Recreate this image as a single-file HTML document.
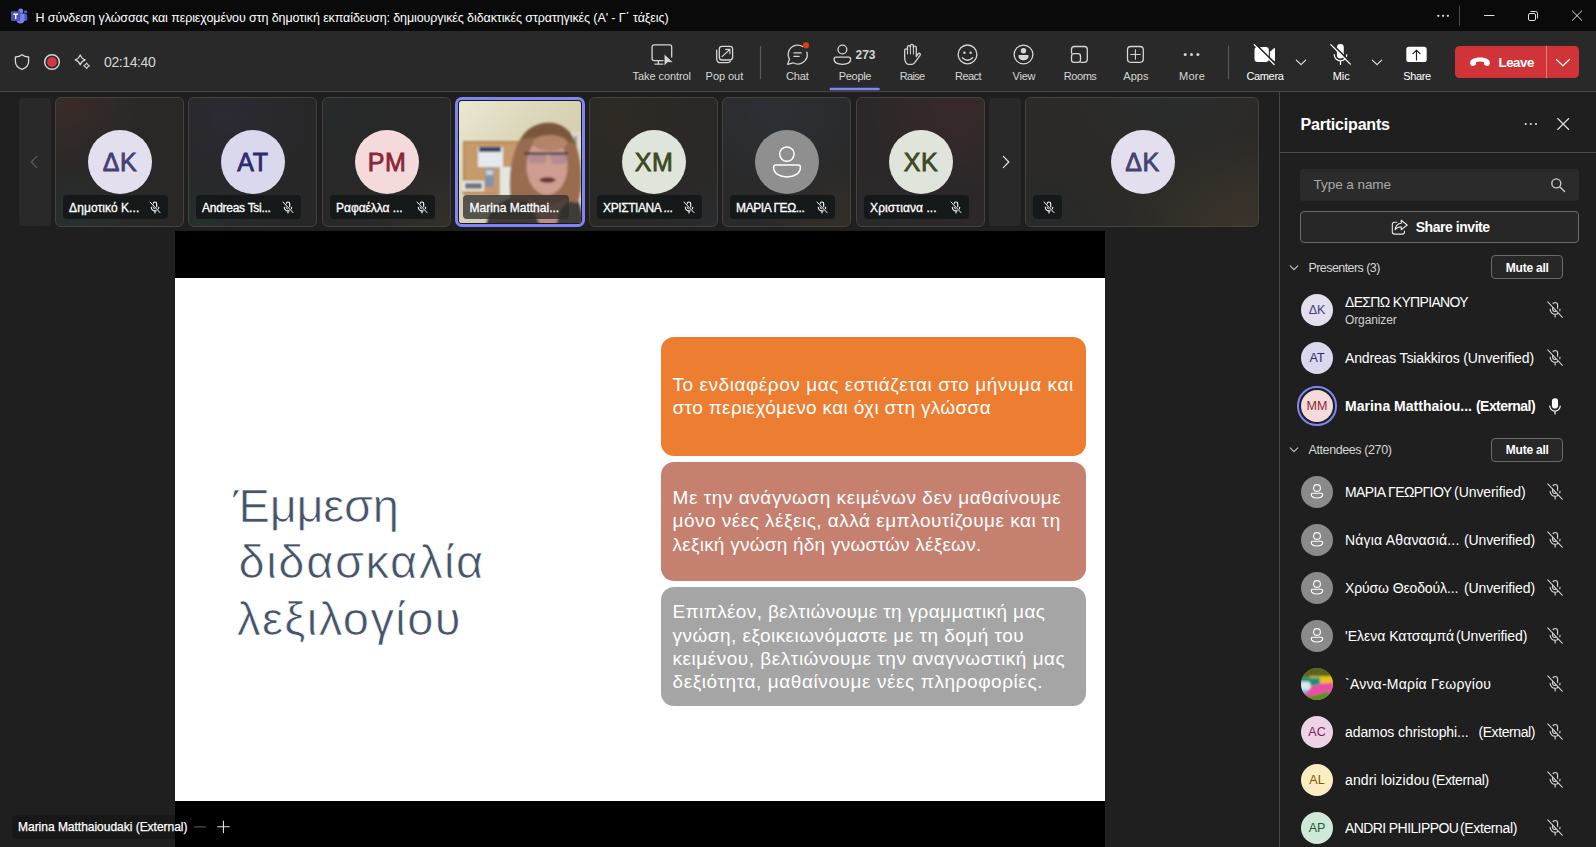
<!DOCTYPE html>
<html lang="en">
<head>
<meta charset="utf-8">
<title>Teams meeting</title>
<style>
*{box-sizing:border-box;margin:0;padding:0}
html,body{width:1596px;height:847px;overflow:hidden;background:#1f1f1f;font-family:"Liberation Sans",sans-serif;color:#fff}
.abs{position:absolute}
#app{position:relative;width:1596px;height:847px;overflow:hidden;background:#1f1f1f}
/* title bar */
#titlebar{left:0;top:0;width:1596px;height:31px;background:#0a0a0a}
#title{left:35.5px;top:1.6px;height:32px;line-height:32px;font-size:12.5px;color:#fff;white-space:nowrap;letter-spacing:0px}
/* toolbar */
#toolbar{left:0;top:31px;width:1596px;height:60px;background:#292929}
#tbline{left:0;top:91px;width:1596px;height:1px;background:#474747}
.tbi{position:absolute;top:31px;height:60px;width:80px;text-align:center}
.tbi svg{position:absolute;left:50%;top:11px;transform:translateX(-50%)}
.tbi .lb{position:absolute;left:0;right:0;top:38px;font-size:12px;line-height:14px;color:#d6d6d6;white-space:nowrap}
.tbi.w .lb{color:#fff}
.lb{top:69.1px;font-size:11px;line-height:14px;height:14px;color:#d6d6d6;white-space:nowrap}
.lb.w{color:#fff}
#time{left:104px;top:53px;font-size:14px;line-height:18px;color:#d6d6d6}
/* stage */
#stage{left:0;top:92px;width:1279px;height:755px;background:#1f1f1f}
.tile{position:absolute;top:97px;height:130px;width:129px;border-radius:6px;border:1px solid #45413d;overflow:hidden;background:#262626}
.av{position:absolute;left:32px;top:32px;width:64px;height:64px;border-radius:50%;text-align:center;line-height:65px;font-size:25px;font-weight:400;letter-spacing:.6px;-webkit-text-stroke:.8px currentColor}
.nm{position:absolute;left:7px;top:97px;width:105px;height:24px;border-radius:4px;background:#16191a;font-size:12px;line-height:26.600px;color:#fff;padding-left:6.100px;white-space:nowrap;overflow:hidden;-webkit-text-stroke:.3px #fff}
.nm svg{position:absolute;right:7px;top:5.500px}
.nmt{font-size:12px;line-height:26.600px;color:#fff;white-space:nowrap;-webkit-text-stroke:.3px #fff}
.arrowbox{top:98px;width:32px;height:128px;border-radius:4px;background:#292929}
/* slide */
#shareBox{left:175px;top:231px;width:930px;height:616px;background:#000}
#slide{left:175px;top:278px;width:930px;height:523px;background:#fff}
.sb{position:absolute;left:661px;width:425px;height:119px;border-radius:13px}

.sl{font-size:19px;line-height:22px;height:22px;color:#fff;white-space:nowrap;margin-top:-17.8px}
.stl{font-size:47px;line-height:52px;height:52px;color:#44546a;white-space:nowrap;margin-top:-41.3px;-webkit-text-stroke:0.7px #fff}
.pav{left:1301px;width:32px;height:32px;border-radius:50%;text-align:center;line-height:32px;font-size:12.500px;overflow:hidden}
.pn{font-size:14px;line-height:18px;height:18px;color:#fff;white-space:nowrap}
/* panel */
#panel{left:1279px;top:92px;width:317px;height:755px;background:#1f1f1f;border-left:1px solid #474747}
</style>
</head>
<body>
<div id="app">
<div id="titlebar" class="abs"></div>
<div id="title" class="abs" style="letter-spacing:-0.096px;">Η σύνδεση γλώσσας και περιεχομένου στη δημοτική εκπαίδευση: δημιουργικές διδακτικές στρατηγικές (Α' - Γ΄ τάξεις)</div>
<!--TITLEICONS-->
<div id="toolbar" class="abs"></div>
<div id="tbline" class="abs"></div>
<div id="time" class="abs" style="letter-spacing:-0.4px;">02:14:40</div>
<svg class="abs" style="left:0;top:0" width="1596" height="92" viewBox="0 0 1596 92" fill="none" stroke="#d6d6d6" stroke-width="1.3" stroke-linecap="round" stroke-linejoin="round">
<!-- teams logo -->
<g stroke="none">
<circle cx="25.6" cy="11.9" r="1.7" fill="#5059c9"/>
<rect x="22.6" y="14.1" width="4.7" height="6.8" rx="2" fill="#5059c9"/>
<circle cx="20.7" cy="11" r="2.5" fill="#7b83eb"/>
<path d="M16.6 13.4h7.8v6.2a3.9 3.9 0 0 1-7.8 0z" fill="#7b83eb"/>
<rect x="11" y="11.3" width="9.2" height="9.7" rx="1" fill="#4b53bc"/>
<path d="M13.4 13.6h4.6v1.3h-1.6v4.2h-1.4v-4.2h-1.6z" fill="#fff"/>
</g>
<!-- window controls -->
<g stroke="#e0e0e0" stroke-width="1">
<circle cx="1438.3" cy="15.8" r="1.15" fill="#e0e0e0" stroke="none"/><circle cx="1443.1" cy="15.8" r="1.15" fill="#e0e0e0" stroke="none"/><circle cx="1447.9" cy="15.8" r="1.15" fill="#e0e0e0" stroke="none"/>
<path d="M1459.5 6v19.5" stroke="#4a4a4a"/>
<path d="M1484.5 15.5h9.5"/>
<rect x="1528.5" y="13.5" width="7" height="7" rx="1.5"/><path d="M1531 11.5h4.5a2 2 0 0 1 2 2v4.5"/>
<path d="M1572.4 11l9.300 9.300M1581.700 11l-9.300 9.300"/>
</g>
<!-- shield -->
<path d="M22 54.7c-2 1.6-4.3 2.2-6.6 2.3v4.6c0 4 2.6 6.4 6.6 7.7 4-1.300 6.600-3.700 6.600-7.700v-4.600c-2.300-.1-4.600-.7-6.600-2.300z"/>
<!-- record -->
<circle cx="52" cy="62" r="7.3" stroke-width="1.5"/><circle cx="52" cy="62" r="4.9" fill="#d6363e" stroke="none"/>
<!-- sparkle -->
<path d="M80.200 54.900q1.200 3.800 5 5q-3.800 1.200-5 5q-1.200-3.800-5-5q3.800-1.200 5-5z" stroke-width="1.200"/>
<path d="M86.600 62.900q.7 2.200 2.900 2.900q-2.200.7-2.900 2.900q-.7-2.200-2.900-2.900q2.200-.7 2.900-2.900z" stroke-width="1.100"/>
<!-- take control -->
<path d="M663.300 60.600h-9.200a2 2 0 0 1-2-2v-11.800a2 2 0 0 1 2-2h15.600a2 2 0 0 1 2 2v10.200M658.400 60.800v3.200M655 64.100h8"/>
<path d="M664.100 53.900v12.400l3.500-3.800 5.500-.1z" fill="#d6d6d6" stroke="#292929" stroke-width=".8"/>
<!-- pop out -->
<rect x="719.300" y="46.300" width="13.300" height="13.700" rx="2.800"/>
<path d="M716.700 50.200v9a3.500 3.500 0 0 0 3.500 3.500h7.800a3 3 0 0 0 2.500-1.500" />
<path d="M722 56.700l7.800-7.200M725.600 49.400h4.300v4.300" stroke-width="1.100"/>
<!-- divider -->
<path d="M760.500 46.400v32.400" stroke="#5a5a5a" stroke-width="1.200"/>
<!-- chat -->
<path d="M802.600 46.500a9.400 9.400 0 0 0-13.200 12.600l-1.700 5.200 5.500-1.500a9.400 9.400 0 0 0 13.700-10.600"/>
<path d="M794 52.900h7.200M794 56.400h5"/>
<circle cx="806" cy="45.300" r="3.100" fill="#e2400a" stroke="none"/>
<!-- people -->
<circle cx="842.400" cy="49.500" r="4.400"/>
<path d="M836 57.200h12.800a1.900 1.900 0 0 1 1.900 1.900c0 3.400-3.600 5.300-8.300 5.300s-8.300-1.900-8.300-5.300a1.900 1.900 0 0 1 1.900-1.900z"/>
<path d="M830.800 89h47.800" stroke="#7f85f5" stroke-width="2.400"/>
<!-- raise -->
<path d="M904.700 58.500v-8.200a1.400 1.400 0 0 1 2.800 0v-3.300a1.450 1.450 0 0 1 2.900 0v-1.200a1.500 1.500 0 0 1 3 0v1.700a1.450 1.450 0 0 1 2.900 0v9l1.800-2.700q1.100-1.200 2-.2q.6.900-.2 2l-5.600 7.600q-.9 1.200-2.400 1.200h-3.200q-2 0-2.900-2q-1.100-2.400-1.100-3.900z"/>
<path d="M907.500 50.300v3.700M910.400 47v7M913.400 47.500v6.500" stroke-width="1"/>
<!-- react -->
<circle cx="967.500" cy="54.400" r="9.400"/>
<circle cx="964.400" cy="52.800" r="1.200" fill="#d6d6d6" stroke="none"/><circle cx="970.600" cy="52.800" r="1.200" fill="#d6d6d6" stroke="none"/>
<path d="M962.300 57.800q5.200 4.800 10.400 0"/>
<!-- view -->
<circle cx="1023.500" cy="54.500" r="9.400"/>
<circle cx="1023.500" cy="50.700" r="2.700" fill="#d6d6d6" stroke="none"/>
<path d="M1019.300 55.100h8.400a.9.900 0 0 1 .9.900c0 2.700-2.100 4.400-5.100 4.400s-5.100-1.700-5.100-4.400a.9.900 0 0 1 .9-.9z" fill="#d6d6d6" stroke="none"/>
<!-- rooms -->
<path d="M1071.500 53v-3.500a3 3 0 0 1 3-3h9.800a3 3 0 0 1 3 3v9.800a3 3 0 0 1-3 3h-3.500"/>
<rect x="1071.500" y="53.600" width="9" height="8.700" rx="2.600"/>
<!-- apps -->
<rect x="1127.500" y="46.500" width="15.800" height="15.800" rx="3.200"/>
<path d="M1135.400 49.700v9.600M1130.600 54.500h9.600" stroke-width="1.100"/>
<!-- more -->
<g fill="#d6d6d6" stroke="none"><circle cx="1185.200" cy="54.500" r="1.500"/><circle cx="1191.500" cy="54.500" r="1.500"/><circle cx="1197.900" cy="54.500" r="1.500"/></g>
<path d="M1228.500 46.100v32.600" stroke="#5a5a5a" stroke-width="1.200"/>
<!-- camera -->
<g fill="#fff" stroke="none">
<rect x="1254.500" y="47.100" width="14.300" height="15" rx="3"/>
<path d="M1269.900 51.800l3.800-3.400q1.300-.9 1.300.6v11.200q0 1.500-1.300.6l-3.800-3.400z"/>
</g>
<path d="M1255.700 44.100l19.400 19.400" stroke="#292929" stroke-width="1.700"/>
<path d="M1254.200 44.600l19.900 19.900" stroke="#fff" stroke-width="1.300"/>
<path d="M1296.300 60.200l4.700 4.500 4.700-4.500" stroke="#e8e8e8" stroke-width="1.100"/>
<!-- mic -->
<rect x="1336.900" y="44.100" width="6.900" height="14.300" rx="3.450" fill="#fff" stroke="none"/>
<path d="M1334.200 54.500a6.300 6.300 0 0 0 12.600 0M1340.500 60.900v3.600" stroke="#fff" stroke-width="1.200"/>
<path d="M1332.300 44.100l19 19" stroke="#292929" stroke-width="1.700"/>
<path d="M1330.800 44.600l19.500 19.500" stroke="#fff" stroke-width="1.300"/>
<path d="M1372.300 60.200l4.700 4.500 4.700-4.500" stroke="#e8e8e8" stroke-width="1.100"/>
<!-- share -->
<rect x="1406.300" y="46.800" width="20.400" height="15.200" rx="2.600" fill="#fff" stroke="none"/>
<path d="M1416.500 60v-9.600M1413 53.600l3.500-3.500 3.500 3.500" stroke="#1f1f1f" stroke-width="1.200"/>
<!-- leave -->
<rect x="1455" y="46" width="124" height="32" rx="4.500" fill="#d13438" stroke="none"/>
<path d="M1546.500 46v32" stroke="#e8797c" stroke-width="1"/>
<path d="M1480 57.600c-5 0-9.800 1.700-9.800 4.900 0 1.500.4 3.400 1.800 3.400l2.600-.5c1-.2 1.400-.9 1.400-1.800v-1.400c1.200-.6 2.600-.8 4-.8s2.800.2 4 .8v1.400c0 .9.400 1.600 1.400 1.800l2.600.5c1.400 0 1.800-1.900 1.800-3.400 0-3.200-4.800-4.900-9.800-4.900z" fill="#fff" stroke="none"/>
<path d="M1556.400 59.500l6.500 6.300 6.500-6.300" stroke="#fff" stroke-width="1.200"/>
</svg>
<div id="l1" class="abs lb" style="letter-spacing:-0.076px;left:632.6px">Take control</div>
<div id="l2" class="abs lb" style="letter-spacing:-0.046px;left:705.6px">Pop out</div>
<div id="l3" class="abs lb" style="letter-spacing:-0.162px;left:786px">Chat</div>
<div id="l4" class="abs lb" style="letter-spacing:-0.328px;left:838.8px">People</div>
<div id="l5" class="abs lb" style="letter-spacing:-0.665px;left:899.7px">Raise</div>
<div id="l6" class="abs lb" style="letter-spacing:-0.53px;left:955px">React</div>
<div id="l7" class="abs lb" style="letter-spacing:-0.214px;left:1012.5px">View</div>
<div id="l8" class="abs lb" style="letter-spacing:-0.449px;left:1063.8px">Rooms</div>
<div id="l9" class="abs lb" style="letter-spacing:0.055px;left:1123.3px">Apps</div>
<div id="l10" class="abs lb" style="letter-spacing:0.209px;left:1179.1px">More</div>
<div id="l11" class="abs lb w" style="letter-spacing:-0.337px;left:1246.4px">Camera</div>
<div id="l12" class="abs lb w" style="letter-spacing:-0.003px;left:1332.7px">Mic</div>
<div id="l13" class="abs lb w" style="letter-spacing:-0.352px;left:1403.2px">Share</div>
<div id="pc" class="abs" style="letter-spacing:-0.044px;left:855.5px;top:46.5px;font-size:12px;line-height:16px;font-weight:700;color:#d6d6d6">273</div>
<div id="lv" class="abs" style="letter-spacing:-0.514px;left:1498.5px;top:53.5px;font-size:13.4px;line-height:18px;font-weight:700;color:#fff">Leave</div>
<!--TOOLBAR-->
<div id="stage" class="abs"></div>
<!--STRIPSTART--><svg width="0" height="0" style="position:absolute"><defs>
<symbol id="mo" viewBox="0 0 12 13"><g fill="none" stroke="#fff" stroke-width="1.100" stroke-linecap="round"><rect x="4.300" y="1" width="3.400" height="6.600" rx="1.700"/><path d="M2.300 6.200a3.700 3.700 0 0 0 7.400 0M6 10v2"/><path d="M1.500 1.500l9.700 10.300" stroke="#16191a" stroke-width="2.200"/><path d="M1 1l10 10.600" stroke-width="1"/></g></symbol>
<symbol id="pers" viewBox="0 0 64 64"><g fill="none" stroke="#fff" stroke-width="1.500"><circle cx="31.900" cy="24.100" r="7.200"/><path d="M20.800 35.100h22.400a2.200 2.200 0 0 1 2.200 2.200c0 6-6 9.700-13.400 9.700s-13.400-3.700-13.400-9.700a2.200 2.200 0 0 1 2.200-2.200z"/></g></symbol>
</defs></svg>
<div class="abs arrowbox" style="left:19px"><svg class="abs" style="left:11px;top:57px" width="8" height="14" viewBox="0 0 8 14"><path d="M6.800 1.400L1.300 7l5.500 5.600" fill="none" stroke="#5c5c5c" stroke-width="1.200" stroke-linecap="round" stroke-linejoin="round"/></svg></div>
<div class="abs arrowbox" style="left:989px"><svg class="abs" style="left:13px;top:57px" width="8" height="14" viewBox="0 0 8 14"><path d="M1.300 1.400L6.800 7l-5.500 5.600" fill="none" stroke="#e0e0e0" stroke-width="1.200" stroke-linecap="round" stroke-linejoin="round"/></svg></div>
<div class="tile" style="left:55px;background:radial-gradient(ellipse 70% 60% at 0% 0%,#3b2c28 0%,rgba(59,44,40,0) 100%),radial-gradient(ellipse 60% 50% at 15% 100%,#27312f 0%,rgba(39,49,47,0) 100%),#292827"><div class="av" style="background:#e3dfef;color:#444072">ΔΚ</div><div class="nm"><span id="n1" style="letter-spacing:0.062px">Δημοτικό Κ...</span><svg width="12" height="13"><use href="#mo"/></svg></div></div>
<div class="tile" style="left:188px;background:radial-gradient(ellipse 70% 60% at 30% 15%,#2c2a33 0%,rgba(44,42,51,0) 100%),radial-gradient(ellipse 60% 50% at 10% 100%,#25302f 0%,rgba(37,48,47,0) 100%),#272727"><div class="av" style="background:#d9d8ec;color:#2f2a6e">AT</div><div class="nm"><span id="n2" style="letter-spacing:-0.285px">Andreas Tsi...</span><svg width="12" height="13"><use href="#mo"/></svg></div></div>
<div class="tile" style="left:322px;background:radial-gradient(ellipse 70% 60% at 100% 100%,#33302a 0%,rgba(51,48,42,0) 100%),radial-gradient(ellipse 60% 50% at 0% 0%,#252a2a 0%,rgba(37,42,42,0) 100%),#282828"><div class="av" style="background:#f4dadb;color:#8a2835">ΡΜ</div><div class="nm"><span id="n3" style="letter-spacing:-0.059px">Ραφαέλλα ...</span><svg width="12" height="13"><use href="#mo"/></svg></div></div>
<div class="tile" style="left:589px;background:radial-gradient(ellipse 70% 60% at 20% 20%,#2f2a24 0%,rgba(47,42,36,0) 100%),radial-gradient(ellipse 60% 50% at 100% 100%,#2a2c2e 0%,rgba(42,44,46,0) 100%),#2a2826"><div class="av" style="background:#e0e5dc;color:#3b4a23">ΧΜ</div><div class="nm"><span id="n5" style="letter-spacing:-0.429px">ΧΡΙΣΤΙΑΝΑ ...</span><svg width="12" height="13"><use href="#mo"/></svg></div></div>
<div class="tile" style="left:722px;background:radial-gradient(ellipse 70% 60% at 40% 10%,#2c3035 0%,rgba(44,48,53,0) 100%),radial-gradient(ellipse 60% 50% at 90% 100%,#332d28 0%,rgba(51,45,40,0) 100%),#2a2a2a"><div class="av" style="background:#8f8f8f"><svg class="abs" style="left:0;top:0" width="64" height="64"><use href="#pers"/></svg></div><div class="nm"><span id="n6" style="letter-spacing:-0.442px">ΜΑΡΙΑ ΓΕΩ...</span><svg width="12" height="13"><use href="#mo"/></svg></div></div>
<div class="tile" style="left:856px;background:radial-gradient(ellipse 70% 60% at 80% 10%,#38292a 0%,rgba(56,41,42,0) 100%),radial-gradient(ellipse 60% 50% at 10% 100%,#2a2a2c 0%,rgba(42,42,44,0) 100%),#2c2829"><div class="av" style="background:#e0e5dc;color:#3b4a23">ΧΚ</div><div class="nm"><span id="n7" style="letter-spacing:0.082px">Χριστιανα ...</span><svg width="12" height="13"><use href="#mo"/></svg></div></div>
<div class="tile" style="left:1025px;width:234px;background:radial-gradient(ellipse 55% 70% at 95% 100%,#3b342b 0%,rgba(59,52,43,0) 100%),radial-gradient(ellipse 50% 60% at 0% 100%,#262a2a 0%,rgba(38,42,42,0) 100%),radial-gradient(ellipse 50% 60% at 60% 0%,#2a2c2d 0%,rgba(42,44,45,0) 100%),#2c2a27"><div class="av" style="left:84.500px;background:#e3dfef;color:#444072">ΔΚ</div><div class="nm" style="width:29px"><svg width="12" height="13"><use href="#mo"/></svg></div></div>
<div class="abs" id="act" style="left:455px;top:97px;width:130px;height:130px;border-radius:7px;background:#7f85f5"></div>
<div class="abs" style="left:458px;top:100px;width:124px;height:124px;border-radius:4px;background:#1b1b1b"></div>
<svg class="abs" style="left:459px;top:101px;border-radius:3px" width="122" height="122" viewBox="459 101 122 122">
<defs><filter id="bl" x="-10%" y="-10%" width="120%" height="120%"><feGaussianBlur stdDeviation="1.300"/></filter>
<linearGradient id="wall" x1="0" y1="0" x2="1" y2="1"><stop offset="0" stop-color="#ebe8d4"/><stop offset=".45" stop-color="#d9d4b4"/><stop offset="1" stop-color="#cbc3a2"/></linearGradient></defs>
<rect x="459" y="101" width="122" height="122" fill="url(#wall)"/>
<g filter="url(#bl)">
<rect x="572" y="132" width="12" height="95" fill="#dcd9cc"/>
<rect x="574.500" y="136" width="2.500" height="60" fill="#9d9a8c"/>
<rect x="463" y="141" width="58" height="54" fill="#b4875a"/>
<rect x="465" y="143" width="55" height="50" fill="#c69a6a"/>
<rect x="478" y="147" width="25" height="20" fill="#e6e9ee"/>
<rect x="479" y="147" width="22" height="5" fill="#35456f"/>
<rect x="485" y="168" width="9" height="19" fill="#8593a8"/>
<rect x="486" y="170" width="7" height="5" fill="#c8d0dc"/>
<rect x="500" y="167" width="13" height="28" fill="#e6e6e0"/>
<rect x="463" y="181" width="21" height="10" fill="#efede6"/>
<rect x="465" y="183" width="17" height="5" fill="#56789a"/>
<rect x="465" y="186.500" width="17" height="2.500" fill="#8a7a5a"/>
<path d="M459 196h62v28h-62z" fill="#d8d1b6"/>
<path d="M486 225c2-15 14-25 32-29l52-2c8 2 12 10 13 31z" fill="#403a36"/>
<path d="M511 202c-3-22-1-50 12-67 8-11 26-14 38-9 13 6 19 25 20 44 1 14 0 24-3 32l-20 6h-32z" fill="#9a6c50"/>
<path d="M521 140c4-12 18-19 32-17 12 2 20 10 23 22-10-8-40-10-55-5z" fill="#7a573e"/>
<ellipse cx="547" cy="166" rx="20.500" ry="29" fill="#cd9d90"/>
<ellipse cx="550" cy="143" rx="17" ry="8" fill="#b48468"/>
<path d="M526 153h18a6 6 0 0 1 0 10h-14zM550 152h17l2 3-4 9h-13z" fill="#a07c96" opacity=".55"/>
<path d="M524 153.500h44" stroke="#3d2d30" stroke-width="2.200" fill="none"/>
<ellipse cx="547.500" cy="180" rx="8" ry="2.800" fill="#6b3438"/>
<path d="M528 198q18 14 38 0l4 28h-46z" fill="#bf8d80"/>
<path d="M518 202q11-4 15 6l7 18h-32z" fill="#403a36"/>
<path d="M556 226l4-15q4-8 13-10l7 25z" fill="#403a36"/>
</g>
</svg>
<div class="abs" style="left:463px;top:195px;width:106px;height:24px;border-radius:4px;background:rgba(46,46,44,.78)"></div>
<div class="abs nmt" style="left:469.600px;top:195px"><span id="n4" style="letter-spacing:0.013px">Marina Matthai...</span></div>
<!--STRIP-->
<div id="shareBox" class="abs"></div>
<div id="slide" class="abs"></div>
<div class="sb" style="top:337px;background:#ed7d31"></div>
<div class="sb" style="top:462px;background:#c58070"></div>
<div class="sb" style="top:587px;background:#a5a5a5"></div>
<div id="s11" class="abs sl" style="letter-spacing:0.544px;left:672.5px;top:391.4px">Το ενδιαφέρον μας εστιάζεται στο μήνυμα και</div>
<div id="s12" class="abs sl" style="letter-spacing:0.337px;left:672.5px;top:415px">στο περιεχόμενο και όχι στη γλώσσα</div>
<div id="s21" class="abs sl" style="letter-spacing:0.55px;left:672.5px;top:504.6px">Με την ανάγνωση κειμένων δεν μαθαίνουμε</div>
<div id="s22" class="abs sl" style="letter-spacing:0.484px;left:672.5px;top:528.2px">μόνο νέες λέξεις, αλλά εμπλουτίζουμε και τη</div>
<div id="s23" class="abs sl" style="letter-spacing:0.234px;left:672.5px;top:551.9px">λεξική γνώση ήδη γνωστών λέξεων.</div>
<div id="s31" class="abs sl" style="letter-spacing:0.379px;left:672.5px;top:618.7px">Επιπλέον, βελτιώνουμε τη γραμματική μας</div>
<div id="s32" class="abs sl" style="letter-spacing:0.472px;left:672.5px;top:642.3px">γνώση, εξοικειωνόμαστε με τη δομή του</div>
<div id="s33" class="abs sl" style="letter-spacing:0.525px;left:672.5px;top:665.4px">κειμένου, βελτιώνουμε την αναγνωστική μας</div>
<div id="s34" class="abs sl" style="letter-spacing:0.576px;left:672.5px;top:688.7px">δεξιότητα, μαθαίνουμε νέες πληροφορίες.</div>
<div id="t1" class="abs stl" style="letter-spacing:-0.221px;left:233px;top:521px">Έμμεση</div>
<div id="t2" class="abs stl" style="letter-spacing:1.623px;left:238.5px;top:577.4px">διδασκαλία</div>
<div id="t3" class="abs stl" style="letter-spacing:1.424px;left:237px;top:634.3px">λεξιλογίου</div>
<div class="abs" style="left:12px;top:815px;width:181px;height:24px;border-radius:4px;background:rgba(0,0,0,.2)"></div>
<div id="bl1" class="abs" style="letter-spacing:-0.019px;left:18px;top:818.500px;font-size:12px;line-height:16px;color:#fff;white-space:nowrap;-webkit-text-stroke:.25px #fff">Marina Matthaioudaki (External)</div>
<svg class="abs" style="left:190px;top:816px" width="44" height="22" viewBox="190 816 44 22" fill="none" stroke-linecap="round"><path d="M194.500 826.900h11.200" stroke="#4f4f4f" stroke-width="1.100"/><path d="M217.700 826.800h11.500M223.450 821.100v11.500" stroke="#e0e0e0" stroke-width="1.100"/></svg>
<!--SLIDE-->
<div id="panel" class="abs"></div>
<!--PANELSTART--><svg width="0" height="0" style="position:absolute"><defs>
<symbol id="mo2" viewBox="0 0 17 18"><g fill="none" stroke="#d6d6d6" stroke-width="1.200" stroke-linecap="round"><rect x="5.900" y="1.600" width="5.200" height="9.400" rx="2.600"/><path d="M3.300 8.700a5.200 5.200 0 0 0 10.400 0M8.500 14v2.800"/><path d="M1.700.3l15 15.800" stroke="#1f1f1f" stroke-width="2.400"/><path d="M.8.900l15.400 16.200" stroke-width="1.100"/></g></symbol>
<symbol id="pers2" viewBox="0 0 32 32"><g fill="none" stroke="#fff" stroke-width="1.100"><circle cx="16" cy="12" r="3.400"/><path d="M11.200 17.300h9.600a1 1 0 0 1 1 1c0 2.400-2.500 3.700-5.800 3.700s-5.800-1.300-5.800-3.700a1 1 0 0 1 1-1z"/></g></symbol>
</defs></svg>
<div class="abs" style="left:1280px;top:152px;width:316px;height:1px;background:#4a4a4a"></div>
<div id="ph" class="abs" style="letter-spacing:-0.191px;left:1300.500px;top:115.400px;font-size:16px;line-height:20px;font-weight:700;color:#fff;white-space:nowrap">Participants</div>
<svg class="abs" style="left:1520px;top:112px" width="56" height="24" viewBox="1520 112 56 24" fill="none" stroke="#e0e0e0" stroke-width="1.100" stroke-linecap="round"><g fill="#e0e0e0" stroke="none"><circle cx="1525.700" cy="124" r="1.050"/><circle cx="1530.800" cy="124" r="1.050"/><circle cx="1536" cy="124" r="1.050"/></g><path d="M1557.700 118.500l11 11M1568.700 118.500l-11 11"/></svg>
<div class="abs" style="left:1300px;top:169px;width:279px;height:32px;border-radius:4px;background:#2b2b2b"></div>
<div id="ps" class="abs" style="letter-spacing:-0.059px;left:1313.600px;top:176.200px;font-size:13.500px;line-height:18px;color:#a8a8a8;white-space:nowrap">Type a name</div>
<svg class="abs" style="left:1549px;top:176px" width="20" height="20" viewBox="1549 176 20 20" fill="none" stroke="#c8c8c8" stroke-width="1.400" stroke-linecap="round"><circle cx="1556.300" cy="183.400" r="4.500"/><path d="M1559.700 186.800l4.900 4.800"/></svg>
<div class="abs" style="left:1300px;top:211px;width:279px;height:32px;border-radius:4px;border:1px solid #6b6b6b;background:#272727"></div>
<svg class="abs" style="left:1390px;top:218px" width="20" height="18" viewBox="1390 218 20 18" fill="none" stroke="#e8e8e8" stroke-width="1.100" stroke-linecap="round" stroke-linejoin="round"><path d="M1396.800 222.200h-2.200a2.300 2.300 0 0 0-2.300 2.300v7.300a2.300 2.300 0 0 0 2.300 2.300h7.600a2.300 2.300 0 0 0 2.300-2.300v-.800"/><path d="M1401.200 220.300v3c-3.600.300-5.600 2.500-6.100 6.300 1.700-2.100 3.600-2.900 6.100-2.900v3.100l6-4.800z"/></svg>
<div id="psi" class="abs" style="letter-spacing:-0.448px;left:1415.700px;top:217.700px;font-size:14px;line-height:18px;font-weight:700;color:#fff;white-space:nowrap">Share invite</div>
<svg class="abs" style="left:1288px;top:262.7px" width="12" height="10" viewBox="0 0 12 10"><path d="M2.200 2.800l3.800 3.900 3.800-3.900" fill="none" stroke="#c8c8c8" stroke-width="1.100" stroke-linecap="round" stroke-linejoin="round"/></svg>
<div id="sec1" class="abs" style="letter-spacing:-0.565px;left:1308.500px;top:259.8px;font-size:12.500px;line-height:16px;color:#d6d6d6;white-space:nowrap">Presenters (3)</div>
<div class="abs" style="left:1491px;top:255.3px;width:72px;height:24px;border-radius:4px;border:1px solid #6b6b6b;background:#272727"></div>
<div id="mb1" class="abs" style="letter-spacing:-0.221px;left:1505.800px;top:259.9px;font-size:12px;line-height:16px;font-weight:700;color:#fff;white-space:nowrap">Mute all</div>
<svg class="abs" style="left:1288px;top:445px" width="12" height="10" viewBox="0 0 12 10"><path d="M2.200 2.800l3.800 3.900 3.800-3.900" fill="none" stroke="#c8c8c8" stroke-width="1.100" stroke-linecap="round" stroke-linejoin="round"/></svg>
<div id="sec2" class="abs" style="letter-spacing:-0.397px;left:1308.500px;top:442.1px;font-size:12.500px;line-height:16px;color:#d6d6d6;white-space:nowrap">Attendees (270)</div>
<div class="abs" style="left:1491px;top:437.6px;width:72px;height:24px;border-radius:4px;border:1px solid #6b6b6b;background:#272727"></div>
<div id="mb2" class="abs" style="letter-spacing:-0.221px;left:1505.800px;top:442.2px;font-size:12px;line-height:16px;font-weight:700;color:#fff;white-space:nowrap">Mute all</div>
<div class="abs pav" style="top:294px;background:#e3dfef;color:#444072">ΔΚ</div><div id="r1a" class="abs pn" style="letter-spacing:-0.677px;left:1345px;top:293.1px;">ΔΕΣΠΩ ΚΥΠΡΙΑΝΟΥ</div><div id="r1s" class="abs" style="letter-spacing:-0.121px;left:1345px;top:311.8px;font-size:12px;line-height:16px;color:#d0d0d0;white-space:nowrap">Organizer</div><svg class="abs" style="left:1546.900px;top:301.1px" width="16.200" height="17.200"><use href="#mo2"/></svg>
<div class="abs pav" style="top:342px;background:#d9d8ec;color:#2f2a6e">AT</div><div id="r2a" class="abs pn" style="letter-spacing:-0.148px;left:1345px;top:348.6px;">Andreas Tsiakkiros (Unverified)</div><svg class="abs" style="left:1546.900px;top:349.1px" width="16.200" height="17.200"><use href="#mo2"/></svg>
<div class="abs" style="left:1297.300px;top:386.3px;width:39.400px;height:39.400px;border-radius:50%;border:2px solid #7f85f5"></div><div class="abs pav" style="top:390px;background:#f4dadb;color:#8a2835">MM</div><div id="r3a" class="abs pn" style="letter-spacing:0.011px;left:1345px;top:396.6px;font-weight:700;">Marina Matthaiou...</div><div id="r3b" class="abs pn" style="letter-spacing:-0.558px;left:1476px;top:396.6px;font-weight:700;">(External)</div><svg class="abs" style="left:1548px;top:397px" width="14" height="18" viewBox="0 0 14 18"><rect x="3.900" y="1.300" width="6.200" height="10.300" rx="3.100" fill="#fff"/><path d="M1.800 9a5.200 5.200 0 0 0 10.400 0M7 14.300v2.700" fill="none" stroke="#fff" stroke-width="1.200" stroke-linecap="round"/></svg>
<div class="abs pav" style="top:476px;background:#8a8a8a"><svg width="32" height="32" style="display:block"><use href="#pers2"/></svg></div><div id="r4a" class="abs pn" style="letter-spacing:-0.602px;left:1345px;top:482.6px;">ΜΑΡΙΑ ΓΕΩΡΓΙΟΥ</div><div id="r4b" class="abs pn" style="letter-spacing:-0.08px;left:1454.1px;top:482.6px;">(Unverified)</div><svg class="abs" style="left:1546.900px;top:483.1px" width="16.200" height="17.200"><use href="#mo2"/></svg>
<div class="abs pav" style="top:524px;background:#8a8a8a"><svg width="32" height="32" style="display:block"><use href="#pers2"/></svg></div><div id="r5a" class="abs pn" style="letter-spacing:0.185px;left:1345px;top:530.6px;">Νάγια Αθανασιά...</div><div id="r5b" class="abs pn" style="letter-spacing:-0.113px;left:1464px;top:530.6px;">(Unverified)</div><svg class="abs" style="left:1546.900px;top:531.1px" width="16.200" height="17.200"><use href="#mo2"/></svg>
<div class="abs pav" style="top:572px;background:#8a8a8a"><svg width="32" height="32" style="display:block"><use href="#pers2"/></svg></div><div id="r6a" class="abs pn" style="letter-spacing:-0.128px;left:1345px;top:578.6px;">Χρύσω Θεοδούλ...</div><div id="r6b" class="abs pn" style="letter-spacing:-0.113px;left:1464px;top:578.6px;">(Unverified)</div><svg class="abs" style="left:1546.900px;top:579.1px" width="16.200" height="17.200"><use href="#mo2"/></svg>
<div class="abs pav" style="top:620px;background:#8a8a8a"><svg width="32" height="32" style="display:block"><use href="#pers2"/></svg></div><div id="r7a" class="abs pn" style="letter-spacing:-0.006px;left:1345px;top:626.6px;">'Ελενα Κατσαμπά</div><div id="r7b" class="abs pn" style="letter-spacing:-0.088px;left:1456px;top:626.6px;">(Unverified)</div><svg class="abs" style="left:1546.900px;top:627.1px" width="16.200" height="17.200"><use href="#mo2"/></svg>
<svg class="abs" style="left:1301px;top:668px;border-radius:50%" width="32" height="32" viewBox="0 0 32 32"><defs><filter id="pb" x="-20%" y="-20%" width="140%" height="140%"><feGaussianBlur stdDeviation=".9"/></filter></defs><rect width="32" height="32" fill="#8a8a30"/><g filter="url(#pb)"><rect x="-2" y="-2" width="36" height="10.500" fill="#5a6420"/><rect x="9" y="8.200" width="25" height="8" fill="#e6c212"/><rect x="-1" y="9.700" width="20" height="8" fill="#14917f"/><path d="M-1 13.500h9l3 6-6 6h-6z" fill="#dde8ea"/><rect x="1" y="22" width="6" height="4" fill="#4cc0f0"/><path d="M25 15h8v10h-6z" fill="#e89030"/><path d="M4 26l6-7 10-3.500 11-1 2 8-12 8-10-1z" fill="#ee4ca8"/><path d="M5 28l10 -1 12-4 2 10h-20z" fill="#5d8f28"/></g></svg><div id="r8a" class="abs pn" style="letter-spacing:0.214px;left:1345px;top:674.6px;">`Αννα-Μαρία Γεωργίου</div><svg class="abs" style="left:1546.900px;top:675.1px" width="16.200" height="17.200"><use href="#mo2"/></svg>
<div class="abs pav" style="top:716px;background:#ecd3e6;color:#80215d">AC</div><div id="r9a" class="abs pn" style="letter-spacing:-0.09px;left:1345px;top:722.6px;">adamos christophi...</div><div id="r9b" class="abs pn" style="letter-spacing:-0.409px;left:1478.4px;top:722.6px;">(External)</div><svg class="abs" style="left:1546.900px;top:723.1px" width="16.200" height="17.200"><use href="#mo2"/></svg>
<div class="abs pav" style="top:764px;background:#fbecc2;color:#7a5c00">AL</div><div id="r10a" class="abs pn" style="letter-spacing:0.143px;left:1345px;top:770.6px;">andri loizidou</div><div id="r10b" class="abs pn" style="letter-spacing:-0.369px;left:1431.7px;top:770.6px;">(External)</div><svg class="abs" style="left:1546.900px;top:771.1px" width="16.200" height="17.200"><use href="#mo2"/></svg>
<div class="abs pav" style="top:812px;background:#cfe8d8;color:#1d5c3a">AP</div><div id="r11a" class="abs pn" style="letter-spacing:-0.596px;left:1345px;top:818.6px;">ANDRI PHILIPPOU</div><div id="r11b" class="abs pn" style="letter-spacing:-0.369px;left:1460px;top:818.6px;">(External)</div><svg class="abs" style="left:1546.900px;top:819.1px" width="16.200" height="17.200"><use href="#mo2"/></svg>
<!--PANEL-->
</div>
</body>
</html>
